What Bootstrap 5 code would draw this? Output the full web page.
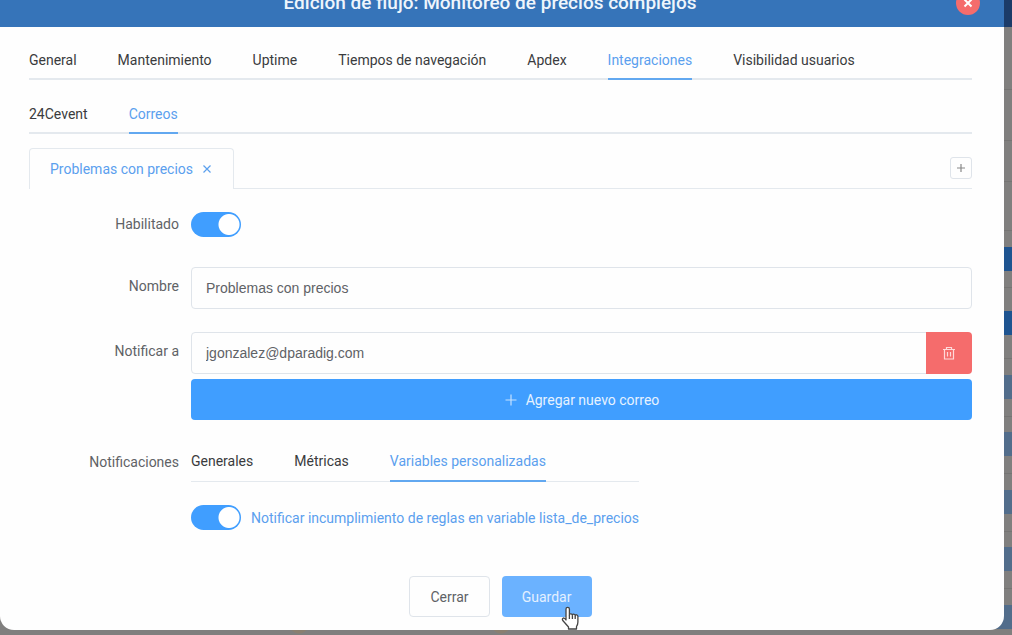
<!DOCTYPE html>
<html lang="es">
<head>
<meta charset="utf-8">
<meta name="viewport" content="width=device-width, initial-scale=1">
<title>Edición de flujo: Monitoreo de precios complejos</title>
<link href="https://cdn.jsdelivr.net/npm/bootstrap@5.3.0/dist/css/bootstrap.min.css" rel="stylesheet">
<style>
:root { --azul: #409eff; --linea: #e4e9ee; --rojo: #f56c6c; }
body { font-family: Roboto, "Liberation Sans", sans-serif; font-size: 14px; line-height: 20px; color: #606266; background: #807f7e; }
.escena { min-height: 100vh; overflow: hidden; }

/* dimmed page behind the dialog */
.fondo {
  position: absolute; inset: 0;
  background:
    radial-gradient(circle at 299px 624px, #8a7f70 9px, transparent 10px),
    radial-gradient(circle at 501px 624px, #8a7f70 9px, transparent 10px),
    linear-gradient(#526d8b, #526d8b) right 84px top 606px / 33px 24px no-repeat,
    linear-gradient(#526d8b, #526d8b) right 31px top 606px / 33px 24px no-repeat,
    #807f7e;
}
.fondo-tabla {
  position: absolute; inset: 0 0 auto auto; width: 24px; height: 629px;
  background: linear-gradient(
    #1b3b68 27px, #807f7e 27px 89px, #757473 89px 90px, #807f7e 90px 140px, #757473 140px 141px,
    #807f7e 141px 181px, #757473 181px 182px, #807f7e 182px 230px, #757473 230px 231px, #807f7e 231px 247px,
    #1e5490 247px 271px, #807f7e 271px 287px, #757473 287px 288px, #807f7e 288px 311px, #1e5490 311px 335px,
    #807f7e 335px 358px, #757473 358px 359px, #807f7e 359px 375px, #526d8b 375px 399px,
    #807f7e 399px 416px, #757473 416px 417px, #807f7e 417px 432px, #526d8b 432px 456px,
    #807f7e 456px 473px, #757473 473px 474px, #807f7e 474px 490px, #526d8b 490px 514px,
    #807f7e 514px 531px, #757473 531px 532px, #807f7e 532px 547px, #526d8b 547px 571px,
    #807f7e 571px 588px, #757473 588px 589px, #807f7e 589px 605px, #526d8b 605px);
}

.dialogo { margin-right: 8px; background: #fefefe; border-radius: 0 0 14px 14px; }
.cabecera { height: 48px; margin-top: -21px; padding: 0 24px; background: #3674b9; color: #eef5fc; }
.cabecera h1 { font-size: 19px; line-height: 24px; font-weight: 500; }
.cerrar { width: 24px; height: 24px; background: var(--rojo); border: 0; border-radius: 50%; color: #fff; }

.cuerpo { padding: 16px 32px 13px 29px; }
.pestanas { gap: 41px; border-bottom: 2px solid var(--linea); }
.pestanas .nav-link { padding: 7px 0 8px; margin-bottom: -2px; line-height: 20px; color: #3a3b3d; border-bottom: 2px solid transparent; }
.pestanas .nav-link.active { color: #5ba0ee; border-bottom-color: #62a8f0; }
.pestanas + .pestanas { margin-top: 17px; }

.fichas { margin-top: 14px; border-bottom: 1px solid var(--linea); }
.ficha { height: 41px; margin-bottom: -1px; padding: 0 20px; background: #fefefe; border: 1px solid var(--linea); border-bottom: 0; border-radius: 4px 4px 0 0; }
.ficha a { color: #5ba0ee; text-decoration: none; }
.ficha button { padding: 0; border: 0; background: none; color: #5ba0ee; line-height: 1; }
.agregar { width: 22px; height: 22px; padding: 0; border: 1px solid #dfe4ea; border-radius: 3px; background: #fefefe; color: #888; }

.formulario { padding-top: 23px; }
.etiqueta { flex: 0 0 150px; text-align: right; line-height: 38px; }
.fila { display: flex; gap: 12px; margin-bottom: 23px; }
.fila-corta { margin-bottom: 30px; }
.fila-corta .etiqueta { line-height: 24px; }
.formulario .interruptor { float: none; flex: none; width: 50px; height: 25px; margin: 0; background-color: var(--azul); border: 0; border-radius: 13px;
  background-image: radial-gradient(circle at 38px 50%, #fff 10px, transparent 11px); background-size: 100% 100%; background-position: 0 0; }
.formulario .form-control { height: 42px; padding: 0 14px; border: 1px solid #dfe4ea; border-radius: 4px; background: #fefefe; color: #606266; font-family: "Liberation Sans", sans-serif; font-size: 14px; }
.correos { gap: 5px; }
.borrar { width: 46px; padding: 0; border-radius: 4px; background: var(--rojo); border: 0; color: #fff; }
.boton { --bs-btn-font-size: 14px; --bs-btn-line-height: 20px; --bs-btn-border-radius: 4px; height: 41px; padding: 0 20px; }
.btn-azul, .btn-azul:hover { background: var(--azul); color: #e6f2ff; border: 0; }
.btn-claro { background: #fefefe; color: #606266; border: 1px solid #dfe4ea; }
.btn-activo, .btn-activo:hover { background: #6bb2ff; color: #e3f0ff; border: 0; }
.aviso { color: #5ba0ee; }
.regla { gap: 10px; padding-top: 23px; }
.panel .pestanas { border-bottom-width: 1px; }
.panel .pestanas .nav-link { padding: 8px 0 9px; margin-bottom: -1px; }
.acciones { gap: 12px; padding-top: 46px; }
.acciones .btn-claro { min-width: 79px; }
.acciones .btn-activo { min-width: 90px; }
.puntero { position: absolute; left: 59px; top: 30px; pointer-events: none; }
svg { display: block; }
</style>
</head>
<body>
<div class="escena position-relative">
  <div class="fondo"><div class="fondo-tabla"></div></div>
  <div class="dialogo position-relative" role="dialog" aria-labelledby="titulo">
    <header class="cabecera d-flex align-items-center">
      <h1 id="titulo" class="m-0 flex-grow-1 text-center">Edición de flujo: Monitoreo de precios complejos</h1>
      <button type="button" class="cerrar d-flex align-items-center justify-content-center p-0" aria-label="Cerrar ventana">
        <svg width="10" height="10" viewBox="0 0 10 10" stroke="currentColor" stroke-width="2"><path d="M1.5 1.5l7 7M8.5 1.5l-7 7"/></svg>
      </button>
    </header>

    <div class="cuerpo">
      <nav class="nav pestanas">
        <a class="nav-link" href="#">General</a>
        <a class="nav-link" href="#">Mantenimiento</a>
        <a class="nav-link" href="#">Uptime</a>
        <a class="nav-link" href="#">Tiempos de navegación</a>
        <a class="nav-link" href="#">Apdex</a>
        <a class="nav-link active" href="#">Integraciones</a>
        <a class="nav-link" href="#">Visibilidad usuarios</a>
      </nav>
      <nav class="nav pestanas">
        <a class="nav-link" href="#">24Cevent</a>
        <a class="nav-link active" href="#">Correos</a>
      </nav>

      <div class="fichas d-flex align-items-center justify-content-between">
        <div class="ficha d-flex align-items-center gap-2">
          <a href="#">Problemas con precios</a>
          <button type="button" aria-label="Cerrar pestaña"><svg width="12" height="12" viewBox="0 0 12 12" stroke="currentColor" stroke-width="1.2"><path d="M2.5 2.5l7 7M9.5 2.5l-7 7"/></svg></button>
        </div>
        <button type="button" class="agregar d-flex align-items-center justify-content-center" aria-label="Agregar pestaña"><svg width="10" height="10" viewBox="0 0 10 10" stroke="currentColor" stroke-width="1.2"><path d="M1 5h8M5 1v8"/></svg></button>
      </div>

      <form class="formulario">
        <div class="fila fila-corta">
          <label class="etiqueta" for="habilitado">Habilitado</label>
          <input class="form-check-input interruptor" type="checkbox" role="switch" id="habilitado" checked>
        </div>
        <div class="fila">
          <label class="etiqueta" for="nombre">Nombre</label>
          <input class="form-control" type="text" id="nombre" value="Problemas con precios">
        </div>
        <div class="fila">
          <label class="etiqueta" for="correo">Notificar a</label>
          <div class="correos flex-grow-1 d-flex flex-column">
            <div class="input-group">
              <input class="form-control" type="email" id="correo" value="jgonzalez@dparadig.com">
              <button type="button" class="btn borrar d-flex align-items-center justify-content-center" aria-label="Eliminar correo">
                <svg width="14" height="14" viewBox="0 0 14 14" fill="none" stroke="#ffd9d9" stroke-width="1.2"><path d="M1 3.5h12M4.5 3.5v-2h5v2M2.500 3.500v9.500h9V3.500M5.500 6v4.500M8.500 6v4.500"/></svg>
              </button>
            </div>
            <button type="button" class="btn boton btn-azul d-flex align-items-center justify-content-center gap-2">
              <svg width="14" height="14" viewBox="0 0 14 14" stroke="#c6e1ff" stroke-width="1.2"><path d="M1.500 7h11M7 1.500v11"/></svg>
              Agregar nuevo correo
            </button>
          </div>
        </div>
        <div class="fila mb-0">
          <span class="etiqueta">Notificaciones</span>
          <div class="panel">
            <nav class="nav pestanas">
              <a class="nav-link" href="#">Generales</a>
              <a class="nav-link" href="#">Métricas</a>
              <a class="nav-link active" href="#">Variables personalizadas</a>
            </nav>
            <div class="regla d-flex align-items-center">
              <input class="form-check-input interruptor" type="checkbox" role="switch" id="reglas" checked>
              <label class="aviso" for="reglas">Notificar incumplimiento de reglas en variable lista_de_precios</label>
            </div>
          </div>
        </div>
        <div class="acciones d-flex justify-content-center">
          <button type="button" class="btn boton btn-claro">Cerrar</button>
          <button type="submit" class="btn boton btn-activo position-relative">Guardar
            <svg class="puntero" width="18" height="24" viewBox="0 0 18 24" fill="#fff" stroke="#444" stroke-width="1.3" stroke-linejoin="round" aria-hidden="true"><path d="M5 14V3a1.700 1.700 0 0 1 3.400 0v6q0-1.300 1.500-1.200t1.500 1.500q0-1.200 1.400-1.100t1.400 1.600q.2-1.200 1.400-1t1.300 1.600V16q0 2.500-1.400 4.500V23H7.500v-2L2 14.800q-1.200-1.700 0-2.600t3 1.800z"/><path d="M8.400 9v4M11.400 9.500V13M14.200 10v3" fill="none"/></svg>
          </button>
        </div>
      </form>
    </div>
  </div>
</div>
<script src="https://cdn.jsdelivr.net/npm/bootstrap@5.3.0/dist/js/bootstrap.bundle.min.js"></script>
</body>
</html>
